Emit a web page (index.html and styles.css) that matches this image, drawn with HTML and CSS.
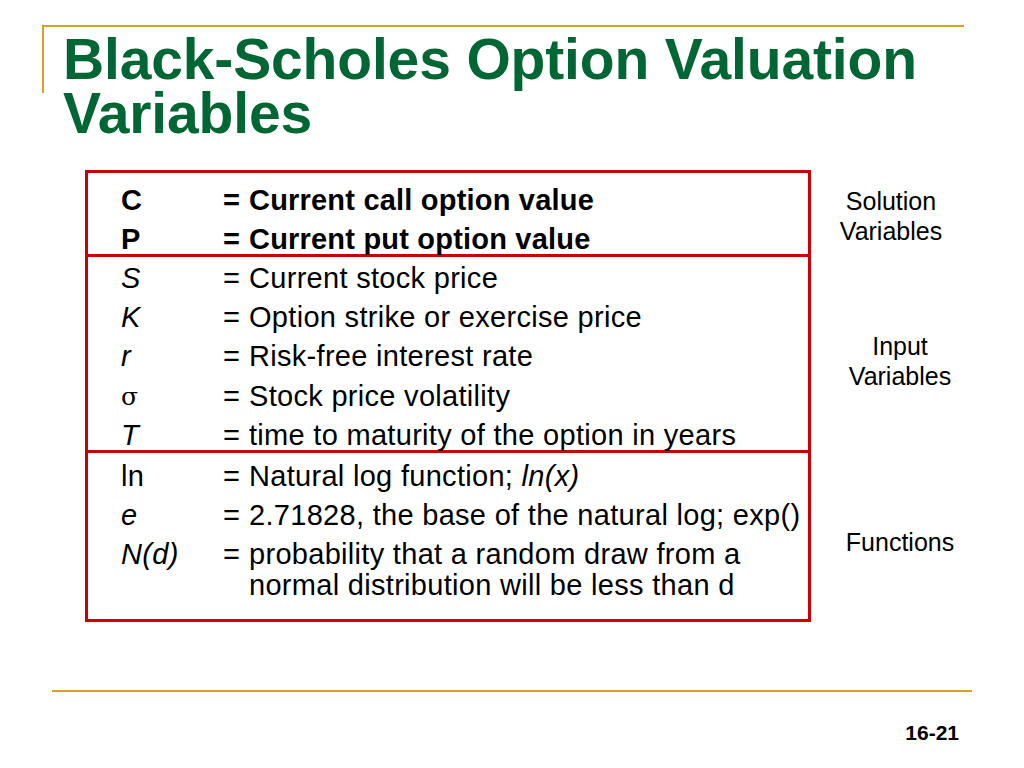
FILE: index.html
```html
<!DOCTYPE html>
<html lang="en">
<head>
<meta charset="utf-8">
<title>Black-Scholes Option Valuation Variables</title>
<link rel="stylesheet" href="styles.css">
</head>
<body>
<div class="slide">
  <header class="title-bar">
    <h1 class="title">Black-Scholes Option Valuation<br>Variables</h1>
  </header>

  <main class="vars">
    <section class="group group-first">
      <div class="row bold"><span class="sym">C</span><span class="eq">=</span><span class="def">Current call option value</span></div>
      <div class="row bold"><span class="sym">P</span><span class="eq">=</span><span class="def">Current put option value</span></div>
    </section>
    <aside class="label label-solution">Solution<br>Variables</aside>

    <section class="group group-mid">
      <div class="row"><span class="sym it">S</span><span class="eq">=</span><span class="def">Current stock price</span></div>
      <div class="row"><span class="sym it">K</span><span class="eq">=</span><span class="def">Option strike or exercise price</span></div>
      <div class="row"><span class="sym it">r</span><span class="eq">=</span><span class="def">Risk-free interest rate</span></div>
      <div class="row"><span class="sym greek">σ</span><span class="eq">=</span><span class="def">Stock price volatility</span></div>
      <div class="row"><span class="sym it">T</span><span class="eq">=</span><span class="def">time to maturity of the option in years</span></div>
    </section>
    <aside class="label label-input">Input<br>Variables</aside>

    <section class="group group-last">
      <div class="row"><span class="sym">ln</span><span class="eq">=</span><span class="def">Natural log function; <i>ln(x)</i></span></div>
      <div class="row"><span class="sym it">e</span><span class="eq">=</span><span class="def">2.71828, the base of the natural log; exp()</span></div>
      <div class="row"><span class="sym it">N(d)</span><span class="eq">=</span><span class="def">probability that a random draw from a<br>normal distribution will be less than d</span></div>
    </section>
    <aside class="label label-func">Functions</aside>
  </main>

  <footer class="foot">
    <span class="page-num">16-21</span>
  </footer>
</div>
</body>
</html>
```

FILE: styles.css
```css
html, body {
  margin: 0;
  padding: 0;
  background: #ffffff;
}

body {
  font-family: "Liberation Sans", Arial, Helvetica, sans-serif;
  color: #000000;
}

.slide {
  width: 1024px;
  height: 768px;
  padding-top: 25px;
  box-sizing: border-box;
  overflow: hidden;
}

/* ---------- title ---------- */
.title-bar {
  position: relative;
  margin-left: 42px;
  width: 922px;
  border-top: 2px solid #d4a226;
}

.title-bar::before {
  content: "";
  position: absolute;
  left: 0;
  top: -2px;
  width: 2px;
  height: 68px;
  background: #d4a226;
}

.title {
  margin: 0;
  padding: 5px 0 0 21px;
  font-size: 57px;
  line-height: 54px;
  font-weight: bold;
  letter-spacing: -0.15px;
  color: #006633;
}

/* ---------- variable table ---------- */
.vars {
  display: grid;
  grid-template-columns: 726px 178px;
  margin: 30px 0 0 85px;
}

.group {
  box-sizing: border-box;
  border-left: 3px solid #cc0000;
  border-right: 3px solid #cc0000;
  border-bottom: 3px solid #cc0000;
  padding-left: 33px;
  display: flex;
  flex-direction: column;
  gap: 8.4px;
}

.group-first {
  border-top: 3px solid #cc0000;
  height: 87px;
  padding-top: 11.5px;
}

.group-mid {
  height: 196px;
  padding-top: 5.5px;
}

.group-last {
  height: 169px;
  padding-top: 7.5px;
}

.row {
  display: grid;
  grid-template-columns: 102px 26px 1fr;
  font-size: 29px;
  line-height: 31px;
  letter-spacing: 0.3px;
  white-space: nowrap;
}

.row.bold {
  font-weight: bold;
  letter-spacing: 0.2px;
}

.it {
  font-style: italic;
}

.greek {
  font-family: "DejaVu Serif", "Liberation Serif", serif;
  font-size: 25px;
}

.def i {
  font-style: italic;
}

/* ---------- side labels ---------- */
.label {
  font-size: 25px;
  line-height: 30px;
  text-align: center;
}

.label-solution {
  padding-top: 16px;
  padding-right: 18px;
}

.label-input {
  padding-top: 74px;
}

.label-func {
  padding-top: 74px;
}

/* ---------- footer ---------- */
.foot {
  margin: 68px 0 0 52px;
  width: 920px;
  border-top: 2px solid #d4a226;
  padding: 29px 13px 0 0;
  box-sizing: border-box;
  text-align: right;
}

.page-num {
  font-size: 21px;
  line-height: 24px;
  font-weight: bold;
}
```
